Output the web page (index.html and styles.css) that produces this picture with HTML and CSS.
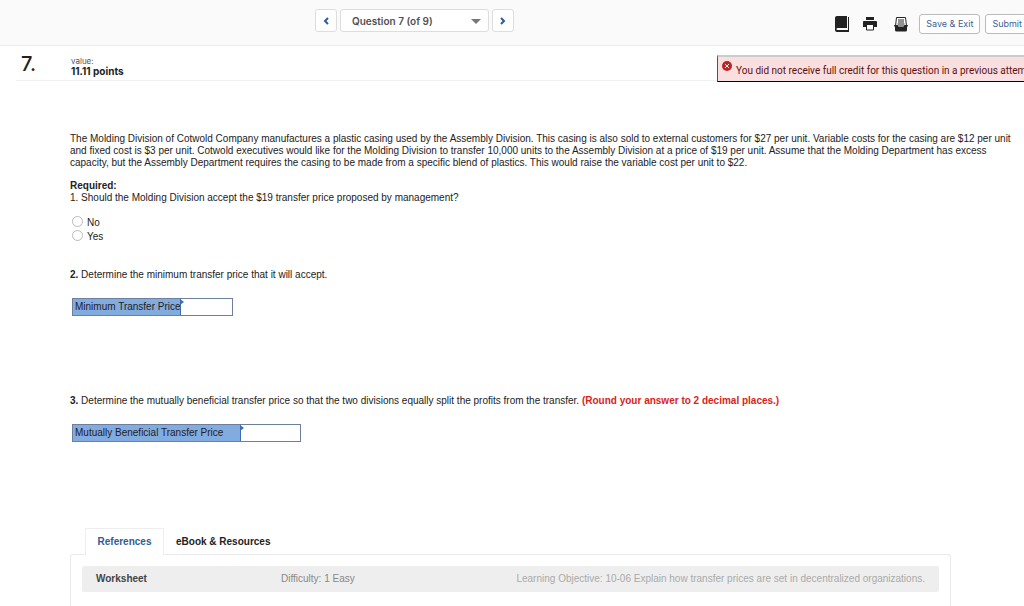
FILE: index.html
```html
<!DOCTYPE html>
<html lang="en">
<head>
  <meta charset="UTF-8">
  <meta name="viewport" content="width=device-width, initial-scale=1.0">
  <title>Question 7 (of 9)</title>
  <link rel="stylesheet" href="styles.css">
</head>
<body>
  <!-- top bar -->
  <header class="topbar">
    <nav class="question-nav">
      <button type="button" class="nav-btn" aria-label="Previous question">
        <svg width="6" height="8" viewBox="0 0 6 8"><path d="M5 1L2 4l3 3"/></svg>
      </button>
      <div class="question-select">
        <select aria-label="Question">
          <option>Question 7 (of 9)</option>
        </select>
        <svg width="10" height="6" viewBox="0 0 10 6"><path d="M0 0h10L5 5z"/></svg>
      </div>
      <button type="button" class="nav-btn" aria-label="Next question">
        <svg width="6" height="8" viewBox="0 0 6 8"><path d="M1 1l3 3-3 3"/></svg>
      </button>
    </nav>
    <div class="tools">
      <button type="button" class="icon-btn" aria-label="eBook">
        <svg width="14" height="16" viewBox="0 0 14 16">
          <path d="M2 0h10v12H2.500a1 1 0 0 0 0 2H13V1h1v15H2a2 2 0 0 1-2-2V2a2 2 0 0 1 2-2z"/>
        </svg>
      </button>
      <button type="button" class="icon-btn" aria-label="Print">
        <svg width="14" height="14" viewBox="0 0 14 14">
          <path d="M3 0h8v3H3z"/>
          <path d="M1 4h12a1 1 0 0 1 1 1v5H0V5a1 1 0 0 1 1-1z"/>
          <path d="M3.500 7.500h7v5.500h-7z" class="sheet"/>
        </svg>
      </button>
      <button type="button" class="icon-btn" aria-label="Report">
        <svg width="14" height="15" viewBox="0 0 14 15">
          <path d="M2.500.5h9l1 8.500h-11z" class="sheet"/>
          <path d="M4 3h6M4 5h6M3.500 7h7" class="sheet"/>
          <path d="M0 8h3.500l1 2h5l1-2H14l-1 2.500V13a1.500 1.500 0 0 1-1.500 1.500h-9A1.500 1.500 0 0 1 1 13v-2.500z"/>
        </svg>
      </button>
      <button type="button" class="action-btn">Save &amp; Exit</button>
      <button type="button" class="action-btn">Submit</button>
    </div>
  </header>

  <!-- question number, value and credit notice -->
  <div class="question-head">
    <div class="number">7.</div>
    <div class="points">
      <span class="value-label">value:</span>
      <strong>11.11 points</strong>
    </div>
    <div class="notice">
      <svg width="10" height="10" viewBox="0 0 10 10">
        <circle cx="5" cy="5" r="5"/>
        <path d="M3 3l4 4M7 3l-4 4"/>
      </svg>
      <span>You did not receive full credit for this question in a previous attempt</span>
    </div>
  </div>

  <main class="question">
    <p class="intro">
      The Molding Division of Cotwold Company manufactures a plastic casing used by the Assembly Division. This casing is also sold to external customers for $27 per unit. Variable costs for the casing are $12 per unit<br>
      and fixed cost is $3 per unit. Cotwold executives would like for the Molding Division to transfer 10,000 units to the Assembly Division at a price of $19 per unit. Assume that the Molding Department has excess<br>
      capacity, but the Assembly Department requires the casing to be made from a specific blend of plastics. This would raise the variable cost per unit to $22.
    </p>
    <p class="required"><b>Required:</b><br>1. Should the Molding Division accept the $19 transfer price proposed by management?</p>

    <div class="choices">
      <label><input type="radio" name="accept" value="no">No</label>
      <label><input type="radio" name="accept" value="yes">Yes</label>
    </div>

    <section class="part">
      <p><b>2.</b> Determine the minimum transfer price that it will accept.</p>
      <div class="answer">
        <label for="minimum">Minimum Transfer Price</label>
        <input type="text" id="minimum">
      </div>
    </section>

    <section class="part">
      <p><b>3.</b> Determine the mutually beneficial transfer price so that the two divisions equally split the profits from the transfer. <b class="hint">(Round your answer to 2 decimal places.)</b></p>
      <div class="answer wide">
        <label for="mutual">Mutually Beneficial Transfer Price</label>
        <input type="text" id="mutual">
      </div>
    </section>
  </main>

  <!-- references -->
  <section class="references">
    <div class="tabs">
      <button type="button" class="tab active">References</button>
      <button type="button" class="tab">eBook &amp; Resources</button>
    </div>
    <div class="panel">
      <div class="reference-row">
        <strong>Worksheet</strong>
        <span class="difficulty">Difficulty: 1 Easy</span>
        <span class="objective">Learning Objective: 10-06 Explain how transfer prices are set in decentralized organizations.</span>
      </div>
    </div>
  </section>
</body>
</html>
```
FILE: styles.css
```css
* {
  box-sizing: border-box;
}

body {
  margin: 0;
  min-height: 100vh;
  display: flex;
  flex-direction: column;
  overflow: hidden;
  background: #fff;
  color: #222;
  font-family: "Liberation Sans", Arial, sans-serif;
  font-size: 10px;
  line-height: 12px;
  white-space: nowrap;
}

p {
  margin: 0;
}

button, select, input {
  font: inherit;
  color: inherit;
  margin: 0;
}

button {
  padding: 0;
  cursor: pointer;
}

/* top bar */
.topbar {
  display: flex;
  justify-content: space-between;
  height: 46px;
  padding: 9px 0 0 315px;
  background: #fafafa;
  border-bottom: 1px solid #ececec;
  font-family: Inter, "Open Sans", sans-serif;
}

.question-nav {
  display: flex;
  gap: 3px;
  height: 23px;
}

.nav-btn, .question-select {
  background: #fff;
  border: 1px solid #ddd;
  border-radius: 3px;
}

.nav-btn {
  width: 22px;
}

.nav-btn path {
  fill: none;
  stroke: #2f5c96;
  stroke-width: 2;
}

.question-select {
  position: relative;
  width: 149px;
}

.question-select select {
  width: 100%;
  height: 100%;
  padding: 0 11px;
  border: 0;
  background: none;
  appearance: none;
  color: #505050;
  font-weight: 600;
}

.question-select svg {
  position: absolute;
  right: 7px;
  top: 9px;
  fill: #777;
  pointer-events: none;
}

.tools {
  display: flex;
  align-items: center;
  height: 30px;
  margin-right: -10px;
}

.icon-btn {
  display: flex;
  border: 0;
  background: none;
  margin-right: 14px;
}

.icon-btn:nth-child(2) {
  margin-right: 17px;
}

.icon-btn:nth-child(3) {
  margin-right: 11px;
}

.icon-btn svg {
  fill: #222;
}

.icon-btn .sheet {
  fill: #fff;
  stroke: #222;
}

.action-btn {
  height: 20px;
  padding: 0 6px;
  margin-right: 5px;
  background: #fff;
  border: 1px solid #bbb;
  border-radius: 3px;
  color: #3a5f98;
  font-size: 9px;
}

/* question header */
.question-head {
  display: flex;
  height: 35px;
  margin-left: 16px;
  padding-left: 5px;
  border-bottom: 1px solid #f0f0f0;
  font-family: Inter, "Open Sans", sans-serif;
}

.number {
  width: 50px;
  padding-top: 10px;
  font-size: 20px;
  font-weight: 500;
  line-height: 16px;
}

.points {
  display: flex;
  flex-direction: column;
  padding-top: 10px;
  line-height: 10px;
}

.value-label {
  font-size: 8px;
  color: #555;
}

.notice {
  display: flex;
  gap: 4px;
  width: 307px;
  height: 27px;
  margin: 9px 0 0 auto;
  padding: 4px 0 0 4px;
  overflow: hidden;
  background: #f9dfdf;
  border: 1px solid;
  border-top-width: 2px;
  border-right-width: 0;
  border-color: #ccc #555 #000 #555;
  color: #5c1010;
  font-family: Roboto, sans-serif;
}

.notice svg {
  flex: none;
  fill: #bd2525;
}

.notice path {
  stroke: #fff;
}

.notice span {
  padding-top: 4px;
}

/* question body */
.question {
  padding: 52px 0 0 70px;
}

.required {
  margin-top: 11px;
}

.choices {
  display: flex;
  flex-direction: column;
  margin-top: 11px;
}

.choices label {
  display: flex;
  align-items: flex-end;
  height: 14px;
}

.choices input {
  appearance: none;
  width: 11px;
  height: 11px;
  margin: 0 4px 2px 2px;
  border: 1px solid #bbb;
  border-radius: 50%;
  background: #fff;
}

.part {
  height: 126px;
}

.choices + .part {
  margin-top: 26px;
}

.answer {
  position: relative;
  display: flex;
  width: 161px;
  height: 18px;
  margin: 17px 0 0 2px;
  border: 1px solid #6d7f9c;
}

.answer label {
  width: 107px;
  padding: 2px 0 2px 2px;
  background: #82abe0;
}

.answer input {
  flex: 1;
  min-width: 0;
  padding: 0 4px;
  border: 0;
  border-left: 1px solid #3f6eae;
  background: #fff;
}

/* marker in the corner of the answer cell */
.answer::after {
  content: "";
  position: absolute;
  left: 107px;
  top: 0;
  border: 3px solid transparent;
  border-left: 4px solid #3f6eae;
  border-right: 0;
}

.answer.wide {
  width: 229px;
}

.answer.wide label {
  width: 167px;
}

.answer.wide::after {
  left: 167px;
}

.hint {
  color: #d92418;
}

/* references */
.references {
  flex: 1;
  display: flex;
  flex-direction: column;
  margin: 7px 73px 0 70px;
}

.tabs {
  display: flex;
  height: 26px;
  padding-left: 15px;
}

.tab {
  height: 27px;
  padding: 0 12px;
  border: 0;
  background: none;
  font-weight: bold;
}

.tab.active {
  position: relative;
  width: 79px;
  padding: 0;
  border: 1px solid #eee;
  border-bottom: 0;
  background: #fff;
  color: #2f5c96;
}

.panel {
  flex: 1;
  padding: 11px;
  border: 1px solid #ebebeb;
  border-bottom: 0;
  border-radius: 3px 3px 0 0;
}

.reference-row {
  display: flex;
  align-items: center;
  height: 26px;
  padding: 0 14px;
  background: #eee;
  border-radius: 2px;
  color: #444;
}

.reference-row strong {
  width: 185px;
}

.difficulty {
  color: #888;
}

.objective {
  margin-left: auto;
  color: #aaa;
}
```
